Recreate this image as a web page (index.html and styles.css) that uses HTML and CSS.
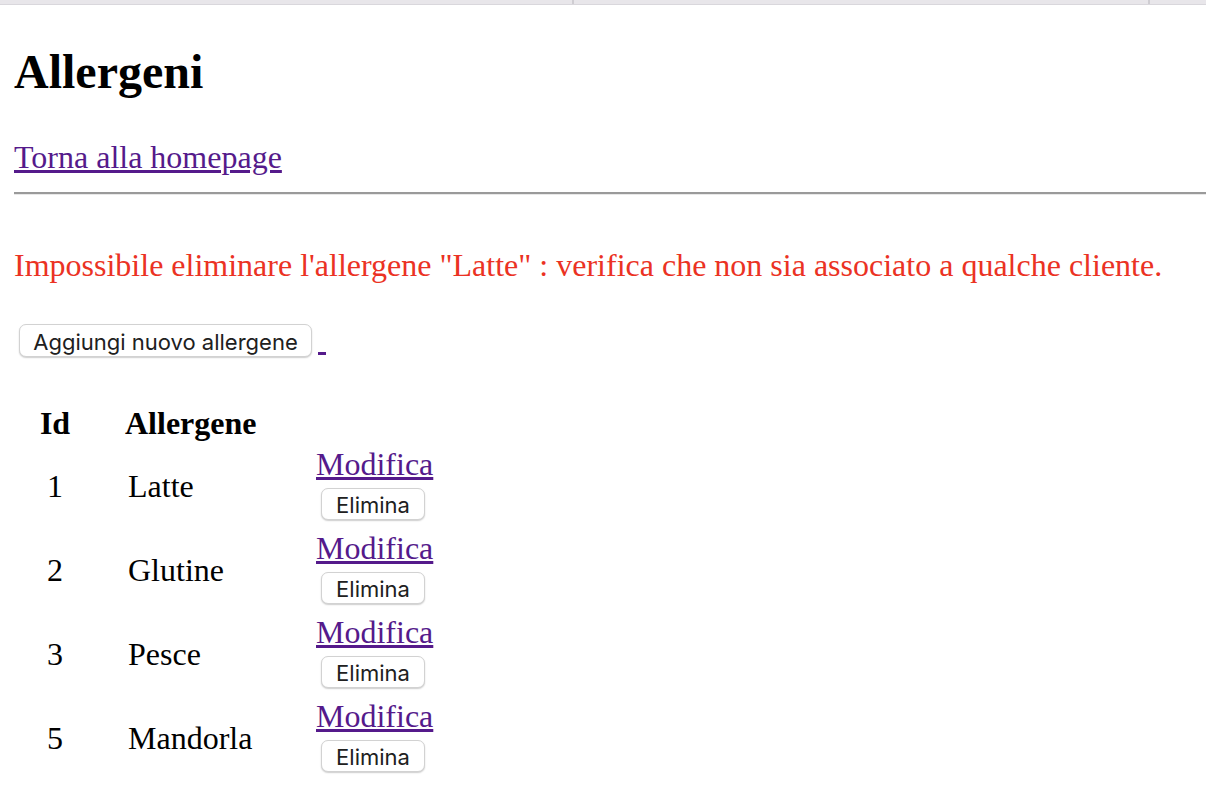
FILE: index.html
```html
<!DOCTYPE html>
<html lang="it">
<head>
<meta charset="utf-8">
<title>Allergeni</title>
<link rel="stylesheet" href="styles.css">
</head>
<body>
<div class="topbar"><div class="seg seg1"></div><div class="seg seg2"></div><div class="seg seg3"></div></div>
<div class="page">
  <h1 class="title">Allergeni</h1>
  <p class="back"><a href="#">Torna alla homepage</a></p>
  <hr class="sep">
  <p class="error">Impossibile eliminare l'allergene "Latte" : verifica che non sia associato a qualche cliente.</p>
  <div class="actions"><a class="addlink" href="#"><button class="btn btn-add" type="button">Aggiungi nuovo allergene</button><span class="gap">&nbsp;</span></a></div>
  <table class="list">
    <thead>
      <tr><th class="c1">Id</th><th class="c2">Allergene</th><th class="c3"></th></tr>
    </thead>
    <tbody>
      <tr><td class="c1">1</td><td class="c2">Latte</td><td class="c3"><a class="mod" href="#">Modifica</a><button class="btn btn-del" type="button">Elimina</button></td></tr>
      <tr><td class="c1">2</td><td class="c2">Glutine</td><td class="c3"><a class="mod" href="#">Modifica</a><button class="btn btn-del" type="button">Elimina</button></td></tr>
      <tr><td class="c1">3</td><td class="c2">Pesce</td><td class="c3"><a class="mod" href="#">Modifica</a><button class="btn btn-del" type="button">Elimina</button></td></tr>
      <tr><td class="c1">5</td><td class="c2">Mandorla</td><td class="c3"><a class="mod" href="#">Modifica</a><button class="btn btn-del" type="button">Elimina</button></td></tr>
    </tbody>
  </table>
</div>
</body>
</html>
```
FILE: styles.css
```css
html, body {
  margin: 0;
  padding: 0;
  background: #ffffff;
}
body {
  font-family: "Liberation Serif", "Times New Roman", serif;
  font-size: 32px;
  line-height: 36px;
  color: #000000;
}
.topbar {
  display: flex;
  height: 4px;
  border-bottom: 1px solid #d9d7dc;
  background: #cfcdd2;
  gap: 2px;
}
.seg {
  background: #e8e6ea;
}
.seg1 { width: 572px; }
.seg2 { width: 574px; }
.seg3 { flex: 1; }
.page {
  padding: 0 0 40px 14px;
}
a {
  color: #551a8b;
}
.title {
  margin: 39px 0 0;
  font-size: 48px;
  line-height: 56px;
  font-weight: bold;
}
.back {
  margin: 39px 0 0;
}
.sep {
  margin: 17px 0 0;
  height: 0;
  border: 0;
  border-top: 2px solid #9a9a9a;
  border-bottom: 1px solid #e8e8e8;
}
.error {
  margin: 52px 0 0;
  color: #eb3223;
}
.actions {
  margin-top: 38px;
}
.gap {
  display: inline;
}
.btn {
  -webkit-appearance: none;
  appearance: none;
  box-sizing: border-box;
  font-family: "Inter", "Liberation Sans", sans-serif;
  font-size: 22px;
  color: #202020;
  background: #ffffff;
  border: 1px solid #d2d2d2;
  border-radius: 7px;
  box-shadow: 0 1px 1.5px rgba(0, 0, 0, 0.2);
  padding: 2px 10px 0;
  cursor: pointer;
  white-space: nowrap;
}
.btn-add {
  height: 33px;
  line-height: 30px;
  width: 293px;
  margin: 0 6px 0 5px;
  vertical-align: baseline;
}
.btn-del {
  display: block;
  height: 32px;
  line-height: 29px;
  width: 104px;
  margin: 6px 0 0 5px;
}
.list {
  margin-top: 48px;
  border-collapse: separate;
  border-spacing: 0;
}
.list th, .list td {
  padding: 0;
  vertical-align: middle;
}
.list th {
  font-weight: bold;
  padding-bottom: 3px;
}
.list .c1 {
  width: 82px;
  text-align: center;
}
.list th.c2 {
  width: 165px;
  padding-left: 29px;
  text-align: left;
}
.list td.c2 {
  padding-left: 32px;
  text-align: left;
}
.list .c3 {
  padding-left: 26px;
  text-align: left;
}
.list td.c3 {
  padding-top: 2px;
  padding-bottom: 8px;
}
.mod {
  display: block;
  width: max-content;
}
```
